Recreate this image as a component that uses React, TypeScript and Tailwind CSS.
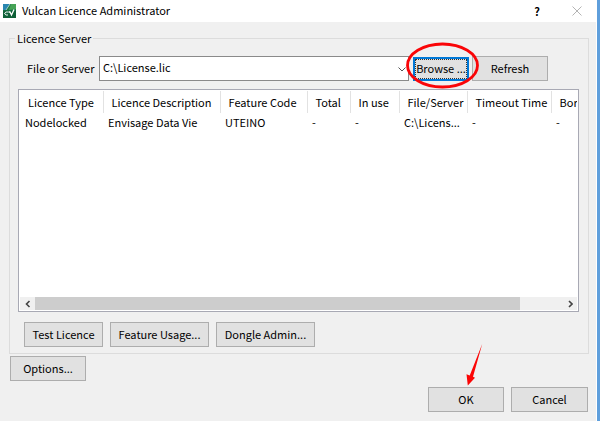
import { useState } from "react";
import type { ReactNode } from "react";

const columns = [
  { label: "Licence Type", width: "w-[83px]" },
  { label: "Licence Description", width: "w-[117px]" },
  { label: "Feature Code", width: "w-[87px]" },
  { label: "Total", width: "w-[43px]" },
  { label: "In use", width: "w-[49px]" },
  { label: "File/Server", width: "w-[68px]" },
  { label: "Timeout Time", width: "w-[84px]" },
  { label: "Bor", width: "w-[60px]" },
];

const rows = [["Nodelocked", "Envisage Data Vie", "UTEINO", "-", "-", "C:\\Licens...", "-", "-"]];

function DialogButton({ children, className }: { children: ReactNode; className: string }) {
  return (
    <button
      type="button"
      className={`h-[25px] shrink-0 whitespace-nowrap border border-[#adadad] bg-[#e1e1e1] pb-[2px] text-center hover:border-[#0078d7] hover:bg-[#e5f1fb] ${className}`}
    >
      {children}
    </button>
  );
}

function AppIcon() {
  return (
    <svg width="13" height="14" viewBox="0 0 13 14" aria-hidden="true">
      <rect width="13" height="14" fill="#1d7a4a" />
      <path d="M0 0h7L3 6H0z" fill="#2a86b0" />
      <path d="M8 0h5v5L6 6z" fill="#46a356" />
      <path d="M7 0L3 6" stroke="#bfe3d4" strokeWidth=".8" />
      <path d="M0 6.5h13V14H0z" fill="#0f6038" />
      <path d="M5 8H3L1.8 9v1L3 11h2" fill="none" stroke="#e8f5ee" strokeWidth="1" />
      <path d="M5.5 8H7l1.5 3L11 5.5" fill="none" stroke="#fff" strokeWidth="1.3" />
    </svg>
  );
}

function TitleBar() {
  return (
    <header className="flex h-[22px] items-center bg-white pl-[3px] pr-[14px]">
      <AppIcon />
      <h1 className="ml-[6px] flex-1 pb-[2px] leading-4">Vulcan Licence Administrator</h1>
      <button type="button" aria-label="Help" className="w-4 text-center font-bold">
        ?
      </button>
      <button type="button" aria-label="Close" className="ml-[27px]">
        <svg width="10" height="10" viewBox="0 0 10 10" stroke="#b4b4b4" strokeWidth="1">
          <path d="M.5.5l9 9M9.5.5l-9 9" />
        </svg>
      </button>
    </header>
  );
}

function ServerRow() {
  const [server, setServer] = useState("C:\\License.lic");

  return (
    <div className="flex items-center">
      <label htmlFor="server" className="w-[81px] shrink-0 whitespace-nowrap pb-[2px] pl-[9px]">
        File or Server
      </label>
      <div className="relative min-w-0 flex-1">
        <select
          id="server"
          value={server}
          onChange={(e) => setServer(e.target.value)}
          className="block h-[25px] w-full appearance-none border border-[#8a8a8a] bg-white pb-1 pl-[3px] pr-4 outline-none"
        >
          <option>C:\License.lic</option>
        </select>
        <svg
          className="pointer-events-none absolute right-[3px] top-[11px]"
          width="8"
          height="5"
          viewBox="0 0 8 5"
          fill="none"
          stroke="#555"
        >
          <path d="M.5.5L4 4 7.5.5" />
        </svg>
      </div>
      <div className="relative ml-1 shrink-0">
        <button type="button" className="block h-6 w-14 whitespace-nowrap border-2 border-[#0078d7] bg-[#e1e1e1]">
          <span className="block h-5 border border-dotted border-[#333] leading-4">Browse ...</span>
        </button>
        {/* red highlight ring */}
        <svg
          className="pointer-events-none absolute -left-2 -top-[15px] z-10"
          width="76"
          height="48"
          viewBox="0 0 76 48"
          fill="none"
        >
          <ellipse cx="37.5" cy="23.5" rx="35" ry="21.5" stroke="#fa0508" strokeWidth="2.8" />
        </svg>
      </div>
      <DialogButton className="ml-[3px] mr-10 w-[76px]">Refresh</DialogButton>
    </div>
  );
}

function LicenceTable() {
  return (
    <div className="ml-2 mr-[9px] mt-2 flex h-[223px] flex-col border border-[#a8a9b4] bg-white p-px">
      <div className="min-h-0 flex-1 overflow-hidden">
        <table className="w-[591px] table-fixed border-collapse text-left">
          <thead>
            <tr className="h-[22px]">
              {columns.map((col) => (
                <th
                  key={col.label}
                  className={`${col.width} whitespace-nowrap border-r border-[#e2e2e2] p-0 pl-2 font-normal`}
                >
                  {col.label}
                </th>
              ))}
            </tr>
          </thead>
          <tbody>
            {rows.map((row) => (
              <tr key={row[0]} className="h-[18px]">
                {row.map((cell, i) => (
                  <td key={i} className="whitespace-nowrap p-0 pl-[5px]">
                    {cell}
                  </td>
                ))}
              </tr>
            ))}
          </tbody>
        </table>
      </div>
      <div className="flex h-[13px] items-center bg-[#f0f0f0]">
        <button type="button" aria-label="Scroll left" className="flex w-[15px] justify-center">
          <svg width="6" height="8" viewBox="0 0 6 8" fill="none" stroke="#444" strokeWidth="1.6">
            <path d="M4.5 1l-3 3 3 3" />
          </svg>
        </button>
        <div className="h-full flex-1">
          <div className="h-full w-[92%] bg-[#cdcdcd]" />
        </div>
        <button type="button" aria-label="Scroll right" className="flex w-[15px] justify-center">
          <svg width="6" height="8" viewBox="0 0 6 8" fill="none" stroke="#444" strokeWidth="1.6">
            <path d="M2 1l3 3-3 3" />
          </svg>
        </button>
      </div>
    </div>
  );
}

export default function App() {
  return (
    <div className="min-h-screen border-r-[3px] border-[#5f9fdc] bg-[#f0f0f0] font-['Noto_Sans_CJK_SC','Noto_Sans',sans-serif] text-[11px] leading-4 text-black">
      <div className="min-h-screen border-r border-white">
        <TitleBar />
        <main className="pl-[9px] pr-[7px] pt-2">
          <fieldset className="min-w-0 border border-[#dcdcdc] pb-[6px]">
            <legend className="ml-[5px] px-[2px]">Licence Server</legend>
            <div className="pl-2 pt-[10px]">
              <ServerRow />
            </div>
            <LicenceTable />
            <div className="mt-[10px] flex gap-[7px] pl-[14px]">
              <DialogButton className="w-[79px]">Test Licence</DialogButton>
              <DialogButton className="w-[99px]">Feature Usage...</DialogButton>
              <DialogButton className="w-[99px]">Dongle Admin...</DialogButton>
            </div>
          </fieldset>
          <div className="mt-[2px] flex pl-px">
            <DialogButton className="w-[76px]">Options...</DialogButton>
          </div>
          <div className="mt-[6px] flex justify-end gap-[7px] pr-px">
            <div className="relative">
              {/* arrow pointing at OK */}
              <svg
                className="pointer-events-none absolute -top-[44px] left-[38px]"
                width="18"
                height="43"
                viewBox="0 0 18 43"
                fill="#fb0505"
              >
                <path d="M16.2 1L7 33.8l2 .9-7.2 7.8L.5 31.3l3.2 1.2z" />
              </svg>
              <DialogButton className="w-[76px]">OK</DialogButton>
            </div>
            <DialogButton className="w-[77px]">Cancel</DialogButton>
          </div>
        </main>
      </div>
    </div>
  );
}
